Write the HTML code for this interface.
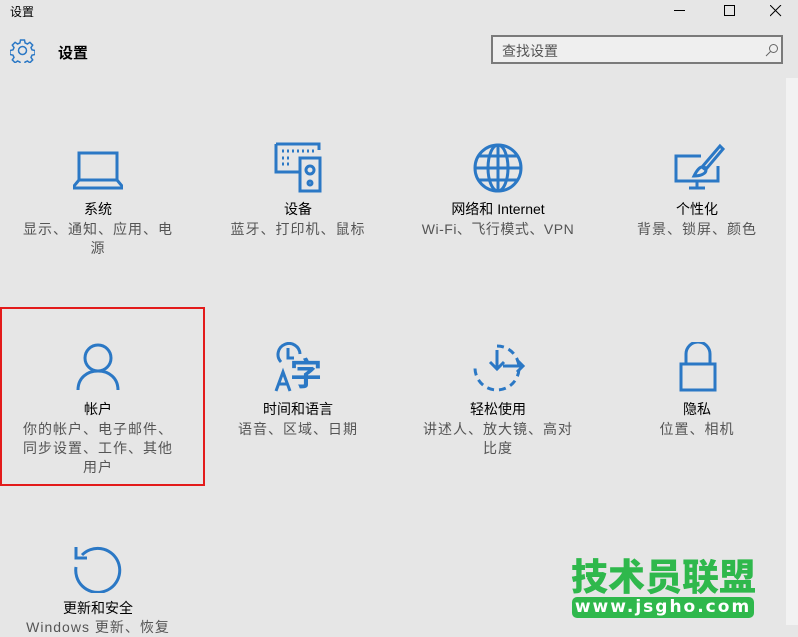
<!DOCTYPE html>
<html><head><meta charset="utf-8"><style>
body{margin:0;width:798px;height:625px;background:#e6e6e6;position:relative;overflow:hidden;font-family:"Liberation Sans","Microsoft YaHei","Noto Sans CJK SC",sans-serif;}
.a{position:absolute}
.t{position:absolute;width:200px;text-align:center;font-size:14px;color:#000;line-height:19px}
.s{position:absolute;width:152px;text-align:center;font-size:14px;color:#555;line-height:19px;letter-spacing:1px}
svg{position:absolute;stroke:#2b78c5;fill:none;stroke-width:3}
</style></head><body>
<div class="a" style="left:10px;top:3px;font-size:12px">设置</div>
<div class="a" style="left:10px;top:38px;width:25px;height:25px">
<svg width="25" height="25" viewBox="0 0 25 25" style="stroke-width:1.5"><path d="M10.5 2h4l.6 3 2.3 1 2.5-1.7 2.8 2.8-1.7 2.5 1 2.3 3 .6v4l-3 .6-1 2.3 1.7 2.5-2.8 2.8-2.5-1.7-2.3 1-.6 3h-4l-.6-3-2.3-1-2.5 1.7-2.8-2.8 1.7-2.5-1-2.3-3-.6v-4l3-.6 1-2.3-1.7-2.5 2.8-2.8 2.5 1.7 2.3-1z"/><circle cx="12.5" cy="12.5" r="4"/></svg></div>
<div class="a" style="left:58px;top:42px;font-size:15px;font-weight:bold">设置</div>
<div class="a" style="left:674px;top:10px;width:11px;border-top:1px solid #000"></div>
<div class="a" style="left:724px;top:5px;width:9px;height:9px;border:1px solid #000"></div>
<svg width="12" height="12" viewBox="0 0 12 12" style="left:770px;top:5px;stroke:#000;stroke-width:1"><path d="M0 0L11 11M11 0L0 11"/></svg>
<div class="a" style="left:491px;top:35px;width:292px;height:29px;border:2px solid #7a7a7a;background:#efefef;box-sizing:border-box"></div>
<div class="a" style="left:502px;top:41px;font-size:14px;color:#555">查找设置</div>
<svg width="14" height="14" viewBox="0 0 14 14" style="left:765px;top:43px;stroke:#666;stroke-width:1"><circle cx="8.5" cy="5.5" r="4"/><path d="M5.5 8.5L1 13"/></svg>
<div class="a" style="left:786px;top:78px;width:12px;height:547px;background:#f2f2f2"></div>

<svg width="50" height="50" style="left:73px;top:145px" viewBox="0 0 50 50"><path d="M6 8h38v27H6z"/><path d="M6 35L1 41v2h48v-2l-5-6"/></svg>
<div class="t" style="left:-2px;top:200px">系统</div>
<div class="s" style="left:22px;top:220px">显示、通知、应用、电源</div>

<svg width="52" height="52" style="left:274px;top:142px" viewBox="0 0 52 52"><path d="M2 2h43v6M2 2v28h24"/><path d="M8 9h2M13 9h2M18 9h2M23 9h2M28 9h2M33 9h2M38 9h2M8 16h2M13 16h2M8 22h2M13 22h2"/><rect x="26" y="16" width="20" height="33"/><circle cx="36" cy="28" r="4"/><circle cx="36" cy="41" r="2"/></svg>
<div class="t" style="left:198px;top:200px">设备</div>
<div class="s" style="left:222px;top:220px">蓝牙、打印机、鼠标</div>

<svg width="52" height="52" style="left:472px;top:142px" viewBox="0 0 52 52"><circle cx="26" cy="26" r="23"/><ellipse cx="26" cy="26" rx="10" ry="23"/><path d="M3 26h46M7 14h38M7 38h38M26 3v46"/></svg>
<div class="t" style="left:398px;top:200px">网络和 Internet</div>
<div class="s" style="left:408px;top:220px;width:180px;letter-spacing:0.5px">Wi-Fi、飞行模式、VPN</div>

<svg width="52" height="52" style="left:673px;top:142px" viewBox="0 0 52 52"><path d="M28 14H3v25h42V24"/><path d="M24 39v7M16 46h16"/><path d="M47 4l3 3-16 19-5-1z M21 34c3-6 6-9 8-9l4 3c0 4-6 6-12 6z"/></svg>
<div class="t" style="left:597px;top:200px">个性化</div>
<div class="s" style="left:621px;top:220px">背景、锁屏、颜色</div>

<div class="a" style="left:0;top:307px;width:201px;height:175px;border:2px solid #e31b1b"></div>
<svg width="50" height="50" style="left:73px;top:342px" viewBox="0 0 50 50"><circle cx="25" cy="16" r="13"/><path d="M5 48c0-12 9-19 20-19s20 7 20 19"/></svg>
<div class="t" style="left:-2px;top:400px">帐户</div>
<div class="s" style="left:22px;top:420px">你的帐户、电子邮件、同步设置、工作、其他用户</div>

<svg width="52" height="52" style="left:273px;top:342px" viewBox="0 0 52 52"><path d="M8 20A11 11 0 1 1 27 12"/><path d="M15 6v10h6"/><path d="M3 49l7-19 7 19M5 42h10"/></svg>
<div class="a" style="left:290px;top:356px;font-size:32px;color:#2b78c5;font-weight:bold;line-height:36px">字</div>
<div class="t" style="left:198px;top:400px">时间和语言</div>
<div class="s" style="left:222px;top:420px">语音、区域、日期</div>

<svg width="56" height="52" style="left:470px;top:342px" viewBox="0 0 56 52"><path d="M27 4a22 22 0 1 1-22 22" stroke-dasharray="7 5"/><path d="M27 8v19M20 20l7 7 7-7M33 24h20M47 18l6 6-6 6"/></svg>
<div class="t" style="left:398px;top:400px">轻松使用</div>
<div class="s" style="left:422px;top:420px">讲述人、放大镜、高对比度</div>

<svg width="52" height="52" style="left:672px;top:342px" viewBox="0 0 52 52"><path d="M14 22V12a12 12 0 0 1 24 0v10"/><rect x="9" y="22" width="34" height="26"/></svg>
<div class="t" style="left:597px;top:400px">隐私</div>
<div class="s" style="left:621px;top:420px">位置、相机</div>

<svg width="52" height="52" style="left:72px;top:541px" viewBox="0 0 52 52"><path d="M10 14A22 22 0 1 1 4 26"/><path d="M4 6v11h11"/></svg>
<div class="t" style="left:-2px;top:599px">更新和安全</div>
<div class="s" style="left:22px;top:618px">Windows 更新、恢复</div>

<div class="a" style="left:571px;top:554px;font-size:37px;font-weight:900;color:#2fb84c;letter-spacing:0px;line-height:40px;font-family:'Noto Sans CJK SC',sans-serif">技术员联盟</div>
<div class="a" style="left:572px;top:597px;width:182px;height:21px;background:#2fb84c;border-radius:5px;color:#fff;font-size:17px;font-weight:bold;text-align:center;line-height:21px;letter-spacing:2px;font-family:'DejaVu Sans',sans-serif">www.jsgho.com</div>
</body></html>
